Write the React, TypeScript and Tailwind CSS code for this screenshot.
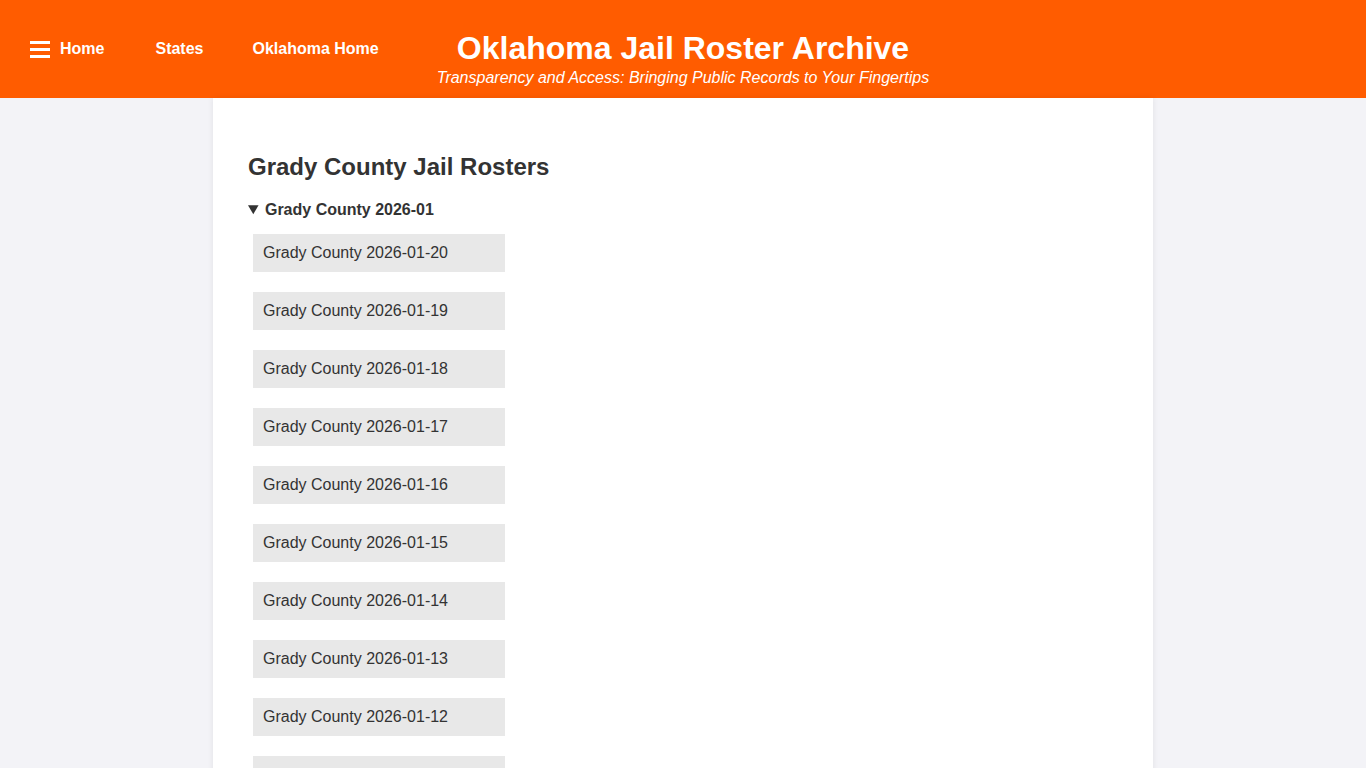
import React from 'react';

const days = ['20', '19', '18', '17', '16', '15', '14', '13', '12', '11', '10', '09'];

export default function App() {
  return (
    <div className="min-h-screen bg-[#f3f3f7] text-[#333] font-['Liberation_Sans',Arial,sans-serif]">
      {/* Header */}
      <header className="h-[98px] bg-[#ff5c00] text-white grid grid-cols-[1fr_auto_1fr] items-center">
        <nav className="flex items-center pl-[30px] font-bold text-[16px]">
          <a className="flex items-center gap-[10px] mr-[51px]" href="#">
            <span className="flex flex-col gap-[4px]">
              <span className="block w-[20px] h-[3px] bg-white"></span>
              <span className="block w-[20px] h-[3px] bg-white"></span>
              <span className="block w-[20px] h-[3px] bg-white"></span>
            </span>
            Home
          </a>
          <a className="mr-[49px]" href="#">States</a>
          <a href="#">Oklahoma Home</a>
        </nav>
        <div className="text-center pt-[19px]">
          <h1 className="text-[32px] leading-[38px] font-bold">Oklahoma Jail Roster Archive</h1>
          <p className="mt-[1px] text-[16px] leading-[20px] italic">Transparency and Access: Bringing Public Records to Your Fingertips</p>
        </div>
        <div></div>
      </header>

      {/* Content card */}
      <main className="w-[940px] mx-auto bg-white rounded-b-[6px] shadow-[0_0_6px_rgba(0,0,0,0.08)] pt-[55px] pb-[40px] px-[35px]">
        <h2 className="text-[24px] leading-[28px] font-bold">Grady County Jail Rosters</h2>
        <details open className="mt-[20px]">
          <summary className="text-[16px] leading-[18px] font-bold cursor-pointer">Grady County 2026-01</summary>
          <ul className="mt-[15px] flex flex-col gap-[20px] pl-[5px]">
            {days.map((d) => (
              <li key={d}>
                <a href="#" className="block w-[252px] h-[38px] leading-[38px] pl-[10px] bg-[#e8e8e8] text-[16px]">
                  Grady County 2026-01-{d}
                </a>
              </li>
            ))}
          </ul>
        </details>
      </main>
    </div>
  );
}
